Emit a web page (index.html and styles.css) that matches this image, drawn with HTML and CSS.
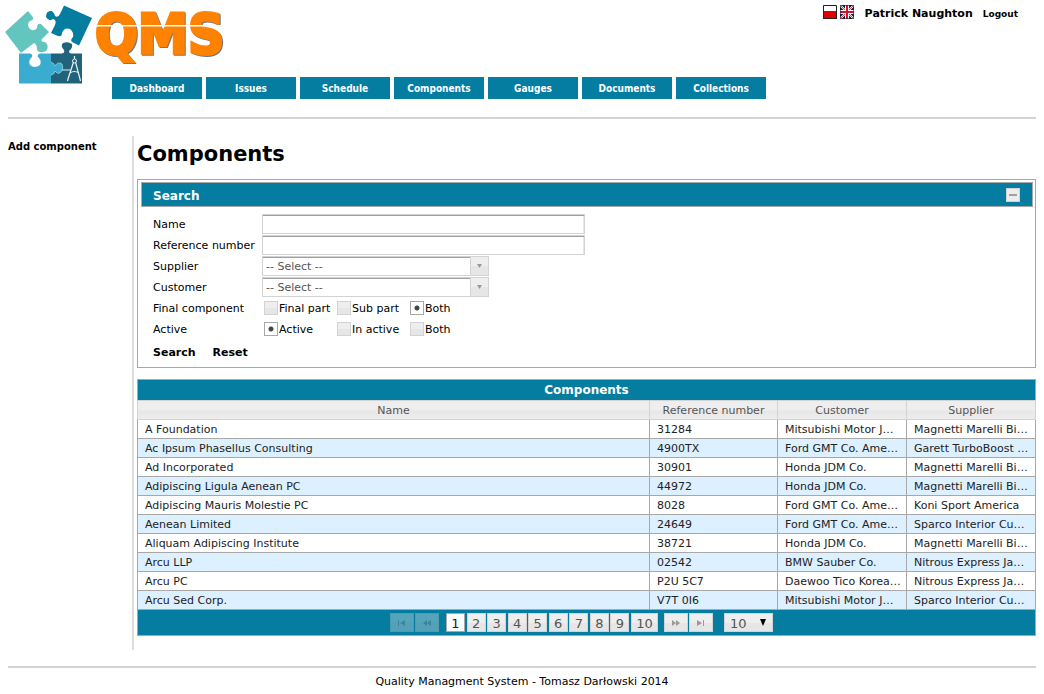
FILE: index.html
```html
<!DOCTYPE html>
<html lang="en">
<head>
<meta charset="utf-8">
<title>QMS - Components</title>
<link rel="stylesheet" href="styles.css">
</head>
<body>
<header class="top">
  <a class="logo" href="#" aria-label="QMS home">
    <svg class="logo-mark" width="225" height="82" viewBox="4 4 225 82">
      <path fill="#62c6bf" d="M5 32 L28 11 L32 16 Q35 20 30 21 Q26 24 30 29 Q34 32 37 28 Q37 23 41 24 L49 32 L42 39 Q40 42 45 42 Q50 46 46 51 Q40 54 37 50 Q37 44 34 43 L21 53 Z"/>
      <path fill="#047da0" d="M64 5.500 L92 18 L79 45.500 L72 42 Q70 40 73 37 Q74 32 70 29 Q64 27 62 33 Q62 37 58 36 L51 33 L55 25 Q57 20 53 19 Q49 22 46 17 Q46 10 52 11 Q55 14 55 16 Q58 18 60 14 Z"/>
      <path fill="#3aaccf" d="M19 53.500 H30 Q33 54 32 57 Q28 60 30 65 Q35 69 40 65 Q42 60 38 57 Q37 54 40 53.500 H51 V83.500 H19 Z"/>
      <path fill="#21637a" d="M51 53.500 H62 Q65 53 64 50 Q60 46 63 43 Q68 41 72 44 Q73 48 69 51 Q69 53 71 53.500 H82 V83.500 H51 Z"/>
      <path fill="#3aaccf" stroke="#a5dbe9" stroke-width=".7" d="M51 62 Q54 63 55 66 Q58 61 62 64 Q64 68 61 72 Q58 75 55 71 Q54 75 51 75"/>
      <path fill="none" stroke="#e8f1f4" stroke-width="1.200" d="M74.500 56v3M73.500 62L68 79l-.5 2M75.500 62L80 79l.5 2M62 70H71M70 73Q74 70 79 73"/>
      <circle cx="74.500" cy="61" r="2" fill="none" stroke="#e8f1f4"/>
      <text class="logo-text" x="95" y="53">QMS</text>
      <path fill="#fff" d="M94 25h135v1.500H94z"/>
    </svg>
  </a>
  <nav class="menu" aria-label="Main">
    <a href="#">Dashboard</a>
    <a href="#">Issues</a>
    <a href="#">Schedule</a>
    <a href="#">Components</a>
    <a href="#">Gauges</a>
    <a href="#">Documents</a>
    <a href="#">Collections</a>
  </nav>
  <div class="user">
    <button class="flag" type="button" aria-label="Polski">
      <svg width="14" height="14" viewBox="0 0 14 14"><path fill="#fff" d="M0 0h14v7H0z"/><path fill="#df0000" d="M0 6h14v8H0z"/><path fill="none" stroke="#222" d="M.5.5h13v13H.5z"/></svg>
    </button>
    <button class="flag" type="button" aria-label="English">
      <svg width="14" height="14" viewBox="0 0 14 14"><path fill="#15155f" d="M0 0h14v14H0z"/><path stroke="#fff" stroke-width="2" d="M0 0l14 14M14 0L0 14"/><path stroke="#e23b4b" d="M0 0l14 14M14 0L0 14"/><path stroke="#fff" stroke-width="4" d="M7 0v14M0 7h14"/><path stroke="#d8102a" stroke-width="2" d="M7 0v14M0 7h14"/><path fill="none" stroke="#222" stroke-opacity=".6" d="M.5.5h13v13H.5z"/></svg>
    </button>
    <strong class="user-name">Patrick Naughton</strong>
    <a class="logout" href="#">Logout</a>
  </div>
</header>

<div class="page">
  <aside class="side"><a href="#">Add component</a></aside>
  <main class="content">
    <h1>Components</h1>

    <form class="panel">
      <div class="panel-head">
        <h2>Search</h2>
        <button class="toggle" type="button" aria-label="Collapse"></button>
      </div>
      <div class="fields">
        <label for="name">Name</label>
        <input class="text" id="name" type="text">
        <label for="ref">Reference number</label>
        <input class="text" id="ref" type="text">
        <label for="supplier">Supplier</label>
        <select class="pick" id="supplier"><option>-- Select --</option></select>
        <label for="customer">Customer</label>
        <select class="pick" id="customer"><option>-- Select --</option></select>
        <span id="final-label">Final component</span>
        <div class="radios" role="radiogroup" aria-labelledby="final-label">
          <label><input type="radio" name="final">Final part</label>
          <label><input type="radio" name="final">Sub part</label>
          <label><input type="radio" name="final" checked>Both</label>
        </div>
        <span id="active-label">Active</span>
        <div class="radios" role="radiogroup" aria-labelledby="active-label">
          <label><input type="radio" name="active" checked>Active</label>
          <label><input type="radio" name="active">In active</label>
          <label><input type="radio" name="active">Both</label>
        </div>
      </div>
      <div class="actions">
        <button type="button">Search</button>
        <button type="reset">Reset</button>
      </div>
    </form>

    <section class="list">
      <table>
        <caption>Components</caption>
        <colgroup><col><col class="narrow"><col class="medium"><col class="medium"></colgroup>
        <thead>
          <tr><th scope="col">Name</th><th scope="col">Reference number</th><th scope="col">Customer</th><th scope="col">Supplier</th></tr>
        </thead>
        <tbody>
          <tr><td>A Foundation</td><td>31284</td><td>Mitsubishi Motor J…</td><td>Magnetti Marelli Bi…</td></tr>
          <tr><td>Ac Ipsum Phasellus Consulting</td><td>4900TX</td><td>Ford GMT Co. Ame…</td><td>Garett TurboBoost …</td></tr>
          <tr><td>Ad Incorporated</td><td>30901</td><td>Honda JDM Co.</td><td>Magnetti Marelli Bi…</td></tr>
          <tr><td>Adipiscing Ligula Aenean PC</td><td>44972</td><td>Honda JDM Co.</td><td>Magnetti Marelli Bi…</td></tr>
          <tr><td>Adipiscing Mauris Molestie PC</td><td>8028</td><td>Ford GMT Co. Ame…</td><td>Koni Sport America</td></tr>
          <tr><td>Aenean Limited</td><td>24649</td><td>Ford GMT Co. Ame…</td><td>Sparco Interior Cu…</td></tr>
          <tr><td>Aliquam Adipiscing Institute</td><td>38721</td><td>Honda JDM Co.</td><td>Magnetti Marelli Bi…</td></tr>
          <tr><td>Arcu LLP</td><td>02542</td><td>BMW Sauber Co.</td><td>Nitrous Express Ja…</td></tr>
          <tr><td>Arcu PC</td><td>P2U 5C7</td><td>Daewoo Tico Korea…</td><td>Nitrous Express Ja…</td></tr>
          <tr><td>Arcu Sed Corp.</td><td>V7T 0I6</td><td>Mitsubishi Motor J…</td><td>Sparco Interior Cu…</td></tr>
        </tbody>
      </table>
      <div class="pager">
        <div class="steps">
          <button type="button" disabled aria-label="First page"><svg width="8" height="6" viewBox="0 0 8 6"><path d="M0 0h1v6H0zM7 0v6L2 3z"/></svg></button>
          <button type="button" disabled aria-label="Previous page"><svg width="8" height="6" viewBox="0 0 8 6"><path d="M4 0v6L0 3zM8 0v6L4 3z"/></svg></button>
        </div>
        <div class="pages">
          <button class="current" type="button" aria-current="page">1</button>
          <button type="button">2</button>
          <button type="button">3</button>
          <button type="button">4</button>
          <button type="button">5</button>
          <button type="button">6</button>
          <button type="button">7</button>
          <button type="button">8</button>
          <button type="button">9</button>
          <button type="button">10</button>
        </div>
        <div class="steps">
          <button type="button" aria-label="Next page"><svg width="8" height="6" viewBox="0 0 8 6"><path d="M0 0l4 3-4 3zM4 0l4 3-4 3z"/></svg></button>
          <button type="button" aria-label="Last page"><svg width="8" height="6" viewBox="0 0 8 6"><path d="M0 0l5 3-5 3zM6 0h1v6H6z"/></svg></button>
        </div>
        <select class="size" aria-label="Rows per page"><option>10</option></select>
      </div>
    </section>
  </main>
</div>

<footer class="foot">Quality Managment System - Tomasz Darłowski 2014</footer>
</body>
</html>
```
FILE: styles.css
```css
* { box-sizing: border-box; }

body {
  margin: 0;
  padding: 0 8px;
  background: #fff;
  color: #000;
  font: 11px/14px Verdana, "DejaVu Sans", sans-serif;
}

a { color: inherit; text-decoration: none; }

button, input, select { margin: 0; font: inherit; color: inherit; }

button { padding: 0; border: 0; background: none; }

/* Header */
.top {
  display: grid;
  grid-template-columns: 1fr auto;
  grid-template-rows: 73px auto;
  align-items: start;
  padding: 4px 0 18px;
  border-bottom: 2px solid #d3d3d3;
}

.logo {
  grid-row: 1;
  height: 73px;
  margin-left: -4px;
}

.logo-mark { display: block; overflow: visible; }

.logo-text {
  font: bold 56px "DejaVu Sans Condensed", "DejaVu Sans", sans-serif;
  fill: #ff8200;
  stroke: #ff8200;
  stroke-width: 3px;
  filter: drop-shadow(1px 1px 0 #777);
}

.menu {
  display: flex;
  grid-row: 2;
  grid-column: 1 / 3;
  gap: 4px;
  padding-left: 104px;
}

.menu a {
  width: 90px;
  padding-top: 1px;
  background: #047da0;
  color: #fff;
  font: bold 10px/21px "DejaVu Sans Condensed", "DejaVu Sans", sans-serif;
  text-align: center;
}

.user {
  display: flex;
  grid-row: 1;
  grid-column: 2;
  align-items: center;
  height: 20px;
  padding-right: 18px;
}

.flag { width: 14px; height: 14px; margin: 0 3px 4px 0; }
.flag svg { display: block; }
.user-name { margin: 0 10px 0 8px; }
.logout { font-size: 9px; font-weight: bold; }

/* Page body */
.page { display: flex; margin-top: 17px; }

.side {
  flex: none;
  width: 126px;
  padding-top: 4px;
  border-right: 2px solid #dcdcdc;
  font-size: 10px;
  font-weight: bold;
}

.content { flex: 1; min-width: 0; padding: 0 0 14px 3px; }

h1 { margin: 0; padding-top: 5px; font-size: 21px; line-height: 26px; }

/* Search panel */
.panel {
  margin-top: 12px;
  padding: 2px;
  border: 1px solid #a8a8a8;
}

.panel-head {
  display: flex;
  align-items: center;
  justify-content: space-between;
  height: 25px;
  margin-left: 1px;
  padding: 0 12px 0 11px;
  border: 1px solid #a8a8a8;
  background: #047da0;
  color: #fff;
}

h2 { margin: 3px 0 0; font-size: 12px; line-height: 16px; }

.toggle {
  width: 14px;
  height: 14px;
  border: 1px solid #d3d3d3;
  background: linear-gradient(#a0a0a0, #a0a0a0) center / 8px 2px no-repeat #ededed;
}

.fields {
  display: grid;
  grid-template-columns: 109px 1fr;
  grid-auto-rows: 20px;
  row-gap: 1px;
  align-items: center;
  padding: 7px 13px 0;
  line-height: 16px;
}

.fields > label, .fields > span { padding-top: 2px; }

.text {
  width: 323px;
  height: 20px;
  padding: 0 3px;
  border: 1px solid #d3d3d3;
  background: #fff;
  box-shadow: inset 0 1px #a0a0a0, inset -1px 0 #e8e8e8;
}

.pick {
  appearance: none;
  width: 227px;
  height: 20px;
  padding: 1px 20px 0 3px;
  border: 1px solid #d3d3d3;
  border-radius: 0;
  color: #555;
  background:
    url("data:image/svg+xml,%3Csvg xmlns='http://www.w3.org/2000/svg' width='5' height='4'%3E%3Cpath fill='%23999' d='M0 0h5L2.500 4z'/%3E%3C/svg%3E") right 6px center no-repeat,
    linear-gradient(#d3d3d3, #d3d3d3) right 17px top / 1px 100% no-repeat,
    linear-gradient(#eee 50%, #e6e6e6 50%) right / 17px 100% no-repeat,
    linear-gradient(#a0a0a0, #a0a0a0) 0 0 / 100% 1px no-repeat #fff;
}

.radios { display: flex; padding: 2px 0 0 2px; }

.radios label { display: flex; align-items: center; width: 73px; white-space: nowrap; }

.radios input {
  appearance: none;
  width: 14px;
  height: 14px;
  margin: -3px 1px 0 0;
  border: 1px solid #d3d3d3;
  background: linear-gradient(#eee 50%, #e6e6e6 50%);
}

.radios input:checked {
  border-color: #a8a8a8;
  background: radial-gradient(circle, #454545 2px, #fff 3px);
}

.actions { display: flex; gap: 17px; padding: 6px 13px 5px; }
.actions button { font-weight: bold; line-height: 15px; }

/* Results */
.list { margin-top: 11px; }

table { width: 100%; border-collapse: collapse; table-layout: fixed; }

caption {
  height: 21px;
  border: 1px solid #a8a8a8;
  border-bottom: 0;
  background: #047da0;
  color: #fff;
  font-size: 12px;
  font-weight: bold;
  line-height: 21px;
}

.narrow { width: 128px; }
.medium { width: 129px; }

th, td { height: 19px; border: 1px solid #a8a8a8; overflow: hidden; white-space: nowrap; line-height: 16px; }

th {
  padding: 2px 7px 0;
  border-color: #d3d3d3;
  background: linear-gradient(#eee 50%, #e6e6e6 50%, #eee);
  color: #555;
  font-weight: normal;
}

td { padding: 2px 0 0 7px; color: #222; }

tbody tr:nth-child(even) { background: #ddf0ff; }

.pager {
  display: flex;
  align-items: center;
  justify-content: center;
  height: 26px;
  padding-right: 10px;
  border: solid #a8a8a8;
  border-width: 0 1px 1px;
  background: #047da0;
  font-size: 13px;
}

.steps, .pages { display: flex; gap: 1px; }

.pager button {
  width: 19px;
  height: 19px;
  border: 1px solid #d3d3d3;
  background: linear-gradient(#eee 50%, #e6e6e6 50%);
  color: #555;
}

.pages { justify-content: space-between; gap: 0; width: 212px; margin: 0 6px 0 7px; }
.pages button { padding: 2px 0 0; }
.pages button:last-child { width: 27px; }
.pager .current { border-color: #a8a8a8; background: #fff; color: #212121; }

.pager .steps button { display: grid; place-items: center; width: 24px; fill: #999; }
.pager .steps button:disabled { opacity: .35; }

.size {
  appearance: none;
  width: 49px;
  height: 19px;
  margin-left: 11px;
  padding: 2px 5px 0;
  border: 1px solid #d3d3d3;
  border-radius: 0;
  color: #555;
  background:
    url("data:image/svg+xml,%3Csvg xmlns='http://www.w3.org/2000/svg' width='6' height='7'%3E%3Cpath d='M0 0h6L3 7z'/%3E%3C/svg%3E") right 6px center no-repeat,
    linear-gradient(#eee 50%, #e6e6e6 50%);
}

/* Footer */
.foot {
  margin-top: 16px;
  padding-top: 7px;
  border-top: 2px solid #d3d3d3;
  text-align: center;
}
```
